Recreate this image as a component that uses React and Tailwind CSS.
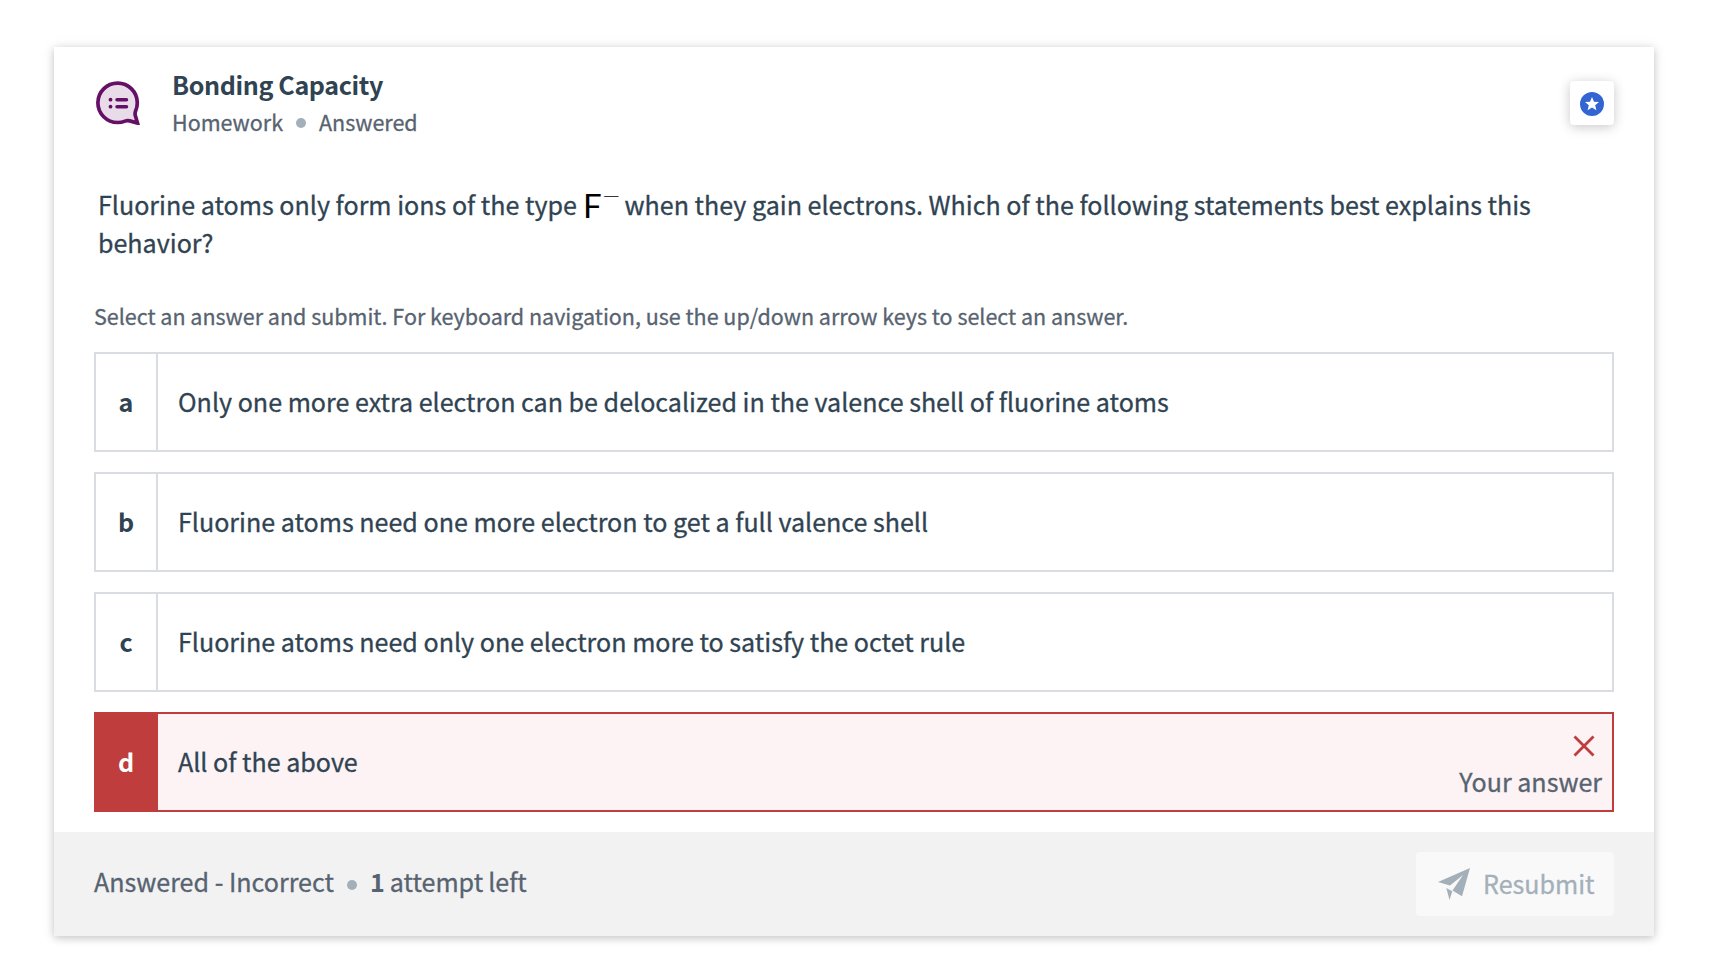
import React from 'react';

const options = [
  { key: 'a', text: 'Only one more extra electron can be delocalized in the valence shell of fluorine atoms' },
  { key: 'b', text: 'Fluorine atoms need one more electron to get a full valence shell' },
  { key: 'c', text: 'Fluorine atoms need only one electron more to satisfy the octet rule' },
];

function HomeworkIcon() {
  return (
    <svg className="h-11 w-11" viewBox="0 0 44 44" fill="none">
      <path
        d="M21.6 2.1C10.7 2.1 1.9 10.9 1.9 21.8s8.8 19.7 19.7 19.7c2.8 0 5.2-.5 7.5-1.4 1.6-.6 3.1-.6 4.6-.2l7.8 2.2-2.2-7.6c-.4-1.5-.3-3 .3-4.5 1.1-2.5 1.7-5.2 1.7-8.2C41.3 10.9 32.5 2.1 21.6 2.1Z"
        fill="#e8dce8"
        stroke="#650f66"
        strokeWidth="3.7"
      />
      <circle cx="14.5" cy="18.7" r="1.9" fill="#650f66" />
      <circle cx="14.5" cy="25.7" r="1.9" fill="#650f66" />
      <path d="M21 18.7h9.5M21 25.7h9.5" stroke="#650f66" strokeWidth="3.5" strokeLinecap="round" />
    </svg>
  );
}

function StarIcon() {
  return (
    <svg className="mt-0.5 h-6 w-6" viewBox="0 0 24 24">
      <circle cx="12" cy="12" r="12" fill="#3264d2" />
      <path d="m12 5 2 4.7 5 .4-3.8 3.2 1.2 4.9-4.4-2.7-4.4 2.7 1.2-4.9L5 10.1l5-.4Z" fill="#fff" />
    </svg>
  );
}

function Dot() {
  return <span className="mt-px h-2.5 w-2.5 rounded-full bg-[#a3b0ba]" />;
}

export default function App() {
  return (
    <div className="h-[972px] bg-white pt-[47px] pl-[54px] font-['Noto_Sans_CJK_SC',sans-serif] text-[25.07px] whitespace-nowrap text-[#304352] [-webkit-text-stroke:0.3px]">
      <div className="flex h-[889px] w-[1600px] flex-col bg-white shadow-[0_2px_8px_rgba(0,0,0,0.2),0_0_16px_rgba(0,0,0,0.06)]">
        <header className="flex h-[114px] items-start pr-10 pl-[42px]">
          <div className="mt-[34px]">
            <HomeworkIcon />
          </div>
          <div className="mt-[18px] ml-8 flex-1">
            <h1 className="h-[38px] leading-[38px] font-bold tracking-[-0.37px] [-webkit-text-stroke:0]">Bonding Capacity</h1>
            <div className="flex h-[38px] items-center text-[21.5px] leading-[38px] text-[#576370]">
              <span className="w-[124px]">Homework</span>
              <Dot />
              <span className="ml-[13px]">Answered</span>
            </div>
          </div>
          <button className="mt-[34px] flex h-11 w-11 items-center justify-center rounded bg-white shadow-[0_2px_12px_rgba(0,0,0,0.22)]">
            <StarIcon />
          </button>
        </header>

        <main className="flex-1 px-10">
          <div className="mt-[24px] pl-1 leading-[38px]">
            <p className="flex h-[38px]">
              <span className="w-[485px]">Fluorine atoms only form ions of the type</span>
              <span className="relative top-px w-[19.5px] font-[Lato] text-[33px] text-black [-webkit-text-stroke:0]">F</span>
              <span className="relative -top-[7px] w-[22px] origin-center scale-y-60 font-['Liberation_Serif'] text-[31px] text-black [-webkit-text-stroke:0]">−</span>
              <span>when they gain electrons. Which of the following statements best explains this</span>
            </p>
            <p>behavior?</p>
          </div>
          <p className="mt-[37px] mb-[18px] h-9 text-[21.49px] leading-9 text-[#576370]">
            Select an answer and submit. For keyboard navigation, use the up/down arrow keys to select an answer.
          </p>

          <div className="flex flex-col gap-5">
            {options.map((o) => (
              <div key={o.key} className="flex h-[100px] border-2 border-[#d9dde1] leading-[94px]">
                <div className="w-[62px] border-r-2 border-[#d9dde1] text-center font-bold [-webkit-text-stroke:0]">{o.key}</div>
                <div className="pl-5">{o.text}</div>
              </div>
            ))}
            <div className="flex h-[100px] border-2 border-[#c03d3d] bg-[#fdf3f5] leading-[94px]">
              <div className="w-[62px] border-r-2 border-[#c03d3d] bg-[#c03d3d] text-center font-bold text-white [-webkit-text-stroke:0]">d</div>
              <div className="flex-1 pl-5">All of the above</div>
              <div className="flex flex-col items-end pr-2.5">
                <svg className="mt-[21px] mr-[7px] h-[22px] w-[22px]" viewBox="0 0 22 22" stroke="#c03d3d" strokeWidth="2.8">
                  <path d="M1.5 1.5l19 19M20.5 1.5l-19 19" />
                </svg>
                <span className="mt-[5px] leading-[38px] text-[#576370]">Your answer</span>
              </div>
            </div>
          </div>
        </main>

        <footer className="flex h-[104px] items-center bg-[#f2f2f2] px-10 text-[#576370]">
          <div className="flex flex-1 items-center">
            <span className="w-[253px] pb-1">Answered - Incorrect</span>
            <Dot />
            <span className="ml-[13px] pb-1 [word-spacing:-0.6px]">
              <b className="[-webkit-text-stroke:0]">1</b> attempt left
            </span>
          </div>
          <button className="flex h-16 w-[198px] items-center rounded bg-[#f9f9f9] pl-[22px] text-[#a3b0ba]">
            <svg className="h-8 w-8" viewBox="0 0 32 32" fill="currentColor">
              <path d="M32 0 0 14l12 3.5L25 7 14.5 22.5 24 28.3Z" />
              <path d="m8.3 20 6 3.3-2.8 8.7Z" />
            </svg>
            <span className="ml-[13px]">Resubmit</span>
          </button>
        </footer>
      </div>
    </div>
  );
}
